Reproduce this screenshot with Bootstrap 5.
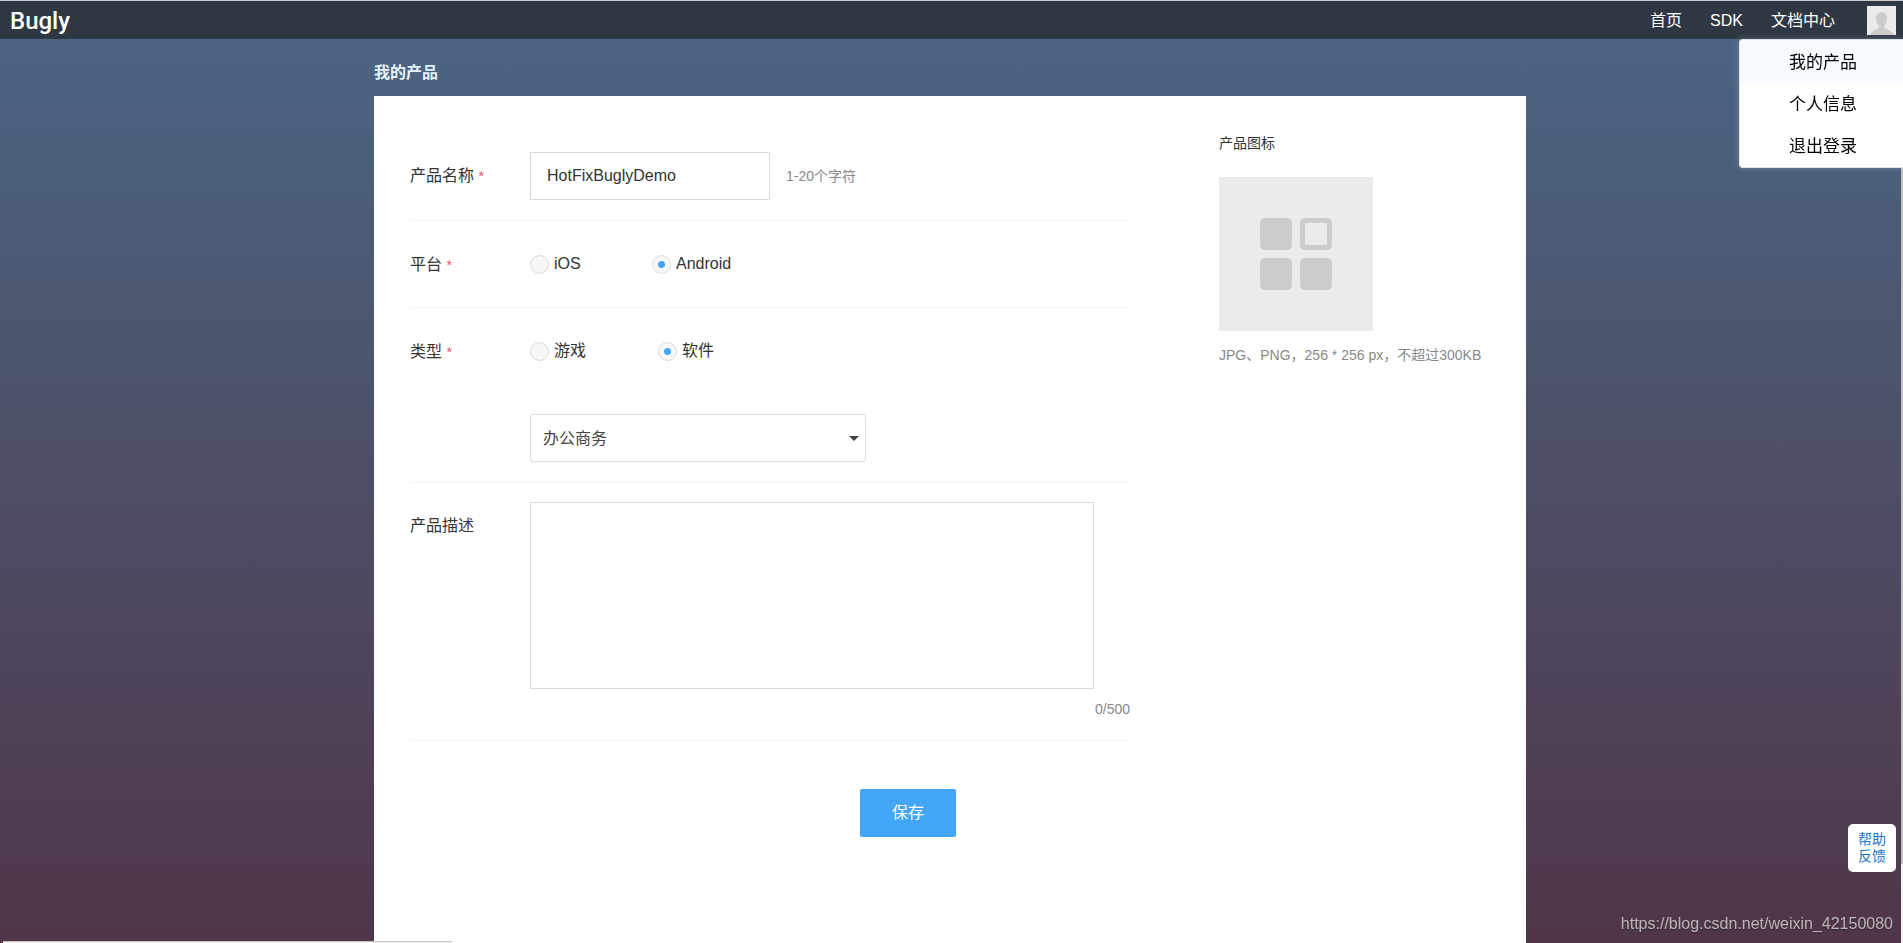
<!DOCTYPE html>
<html lang="zh-CN">
<head>
<meta charset="utf-8">
<meta name="viewport" content="width=device-width, initial-scale=1">
<title>Bugly - 我的产品</title>
<link href="https://cdn.jsdelivr.net/npm/bootstrap@5.3.0/dist/css/bootstrap.min.css" rel="stylesheet">
<style>
  html { height: 100%; }
  body {
    height: 100vh; overflow: hidden; font-family: "Liberation Sans", "Noto Sans CJK SC", sans-serif;
    font-size: 16px; line-height: 24px; color: #333;
    background: linear-gradient(#4b6785, #4f3648);
  }
  .topbar { height: 39px; background: #2f3842; border-top: 1px solid #ccc; padding: 0 7px 0 10px; }
  .logo { font-family: Roboto, sans-serif; font-size: 24px; font-weight: 500; color: #fff; text-decoration: none; padding-top: 2px; }
  .topbar .nav-link { color: #fff; padding: 2px 0 0; }
  .user-menu { right: 0; top: 39px; width: 164px; border: 1px solid #dfe1e5; border-right: 0; border-radius: 4px 0 0 4px; box-shadow: 0 0 6px rgba(190, 220, 240, .3); font-size: 17px; z-index: 5; }
  .user-menu a { color: #000; text-decoration: none; line-height: 40px; padding: 2px 0 0 49px; }
  .user-menu a.current { background: #f7fbff; line-height: 41px; }
  .page-wrap { padding-right: 3px; }
  .page-col { width: 100%; max-width: 1152px; }
  .page-title { font-size: 16px; line-height: 24px; font-weight: 700; color: #e6f4ff; padding: 22px 0 11px; }
  .panel { padding: 36px; }
  .form-line { border-bottom: 1px solid #f4f4f4; padding: 20px 0; }
  .form-line-desc { padding: 19px 0; }
  .line-label { width: 120px; flex: none; line-height: 47px; height: 46px; }
  .req { color: #e0556e; font-size: 14px; }
  .small-note { font-size: 14px; color: #888; }
  .field { border: 1px solid #ddd; color: #333; font-size: 16px; }
  .field-name { width: 240px; height: 48px; border-radius: 0; padding: 0 16px; }
  .field-kind { width: 336px; height: 48px; border-radius: 3px; padding: 2px 12px 0; color: #444; background-color: #fff; appearance: none; }
  .select-arrow { right: 7px; top: 22px; pointer-events: none; }
  .field-desc { width: 564px; height: 187px; border-radius: 0; resize: none; display: block; }
  .choice { height: 46px; gap: 5px; }
  .choice input { appearance: none; width: 19px; height: 19px; margin: 0; border: 1px solid #ddd; border-radius: 50%; background: #f7f7f7; }
  .choice input:checked { background: radial-gradient(circle, #42a5f5 0 3px, #f7f7f7 4px); }
  .choice-first { width: 122px; }
  .choice-first.wide { width: 128px; }
  .btn-save { width: 96px; height: 48px; background: #42a5f5; color: #fff; border: 0; border-radius: 2px; margin: 48px 0 0 450px; }
  .btn-save:hover { background: #2196f3; color: #fff; }
  .side { padding-left: 89px; font-size: 14px; white-space: nowrap; }
  .side-title { line-height: 22px; margin-bottom: 23px; }
  .help { right: 7px; bottom: 71px; width: 48px; height: 48px; border: 0; border-radius: 5px; background: #fff; color: #1976c8; font-size: 14px; line-height: 17px; padding: 0; }
  .source { right: 10px; bottom: 7px; color: rgba(255,255,255,.65); text-decoration: none; text-shadow: 0 1px 1px rgba(0,0,0,.4); }
  .scroll-track { right: 0; top: 39px; bottom: 0; width: 2px; background: linear-gradient(#c1c1c1 0 825px, #f1f1f1 825px); }
  .status-strip { left: 3px; bottom: 0; width: 449px; height: 2px; background: #f2f2f2; border-top: 1px solid #c4c4c4; }
</style>
</head>
<body class="d-flex flex-column">
<header class="topbar d-flex align-items-center justify-content-between flex-shrink-0">
  <a class="logo" href="#">Bugly</a>
  <nav class="d-flex align-items-center">
    <a class="nav-link me-4 pe-1" href="#">首页</a>
    <a class="nav-link me-4 pe-1" href="#">SDK</a>
    <a class="nav-link me-4 pe-2" href="#">文档中心</a>
    <a href="#" class="d-flex" aria-label="用户">
      <svg width="29" height="29" viewBox="0 0 29 29"><rect width="29" height="29" fill="#ebebeb"/><path d="M3 29C3.500 26 6 24.500 11 22.500Q12.500 22 12 20C10 18 9 15 9 12C9 8 11.500 6.300 14.500 6.300S20 8 20 12C20 15 19 18 17.200 20Q16.800 22 18.300 22.500C23 24.500 26 26 26.500 29Z" fill="#ccc"/></svg>
    </a>
  </nav>
</header>

<div class="page-wrap flex-grow-1 d-flex">
<main class="page-col mx-auto d-flex flex-column">
  <h1 class="page-title m-0">我的产品</h1>
  <section class="panel bg-white flex-grow-1">
    <div class="row g-0">
      <form class="col-8">
        <div class="form-line d-flex">
          <label class="line-label" for="name">产品名称 <span class="req">*</span></label>
          <input class="field field-name" id="name" type="text" value="HotFixBuglyDemo">
          <span class="small-note align-self-center ms-3">1-20个字符</span>
        </div>
        <div class="form-line d-flex" role="radiogroup" aria-labelledby="plat">
          <span class="line-label" id="plat">平台 <span class="req">*</span></span>
          <label class="choice choice-first d-flex align-items-center"><input type="radio" name="platform">iOS</label>
          <label class="choice d-flex align-items-center"><input type="radio" name="platform" checked>Android</label>
        </div>
        <div class="form-line d-flex" role="radiogroup" aria-labelledby="kind-label">
          <span class="line-label" id="kind-label">类型 <span class="req">*</span></span>
          <div class="d-flex flex-column">
            <div class="d-flex mb-3 pb-4">
              <label class="choice choice-first wide d-flex align-items-center"><input type="radio" name="kind">游戏</label>
              <label class="choice d-flex align-items-center"><input type="radio" name="kind" checked>软件</label>
            </div>
            <div class="position-relative">
              <select class="field field-kind" aria-label="产品类别"><option>办公商务</option></select>
              <svg class="select-arrow position-absolute" width="10" height="5" viewBox="0 0 10 5"><path d="M0 0H10L5 5Z" fill="#444"/></svg>
            </div>
          </div>
        </div>
        <div class="form-line form-line-desc d-flex">
          <label class="line-label" for="desc">产品描述</label>
          <div class="flex-grow-1">
            <textarea class="field field-desc" id="desc"></textarea>
            <div class="small-note text-end pt-2">0/500</div>
          </div>
        </div>
        <button class="btn btn-save" type="button">保存</button>
      </form>
      <aside class="col-4 side">
        <div class="side-title">产品图标</div>
        <svg class="d-block" width="154" height="154" viewBox="0 0 154 154"><rect width="154" height="154" fill="#ebebeb"/><g fill="#ccc"><rect x="41" y="41" width="32" height="32" rx="5"/><rect x="41" y="81" width="32" height="32" rx="5"/><rect x="81" y="81" width="32" height="32" rx="5"/><path fill-rule="evenodd" d="M86 41h22a5 5 0 0 1 5 5v22a5 5 0 0 1-5 5h-22a5 5 0 0 1-5-5v-22a5 5 0 0 1 5-5zM87 46a1 1 0 0 0-1 1v20a1 1 0 0 0 1 1h20a1 1 0 0 0 1-1v-20a1 1 0 0 0-1-1z"/></g></svg>
        <div class="small-note mt-2 pt-1">JPG、PNG，256 * 256 px，不超过300KB</div>
      </aside>
    </div>
  </section>
</main>
</div>

<div class="scroll-track position-fixed"></div>
<div class="user-menu position-fixed bg-white d-flex flex-column overflow-hidden">
  <a class="current" href="#">我的产品</a>
  <a href="#">个人信息</a>
  <a href="#">退出登录</a>
</div>
<button class="help position-fixed" type="button">帮助<br>反馈</button>
<a class="source position-fixed" href="#">https://blog.csdn.net/weixin_42150080</a>
<div class="status-strip position-fixed"></div>
<script src="https://cdn.jsdelivr.net/npm/bootstrap@5.3.0/dist/js/bootstrap.bundle.min.js"></script>
</body>
</html>
